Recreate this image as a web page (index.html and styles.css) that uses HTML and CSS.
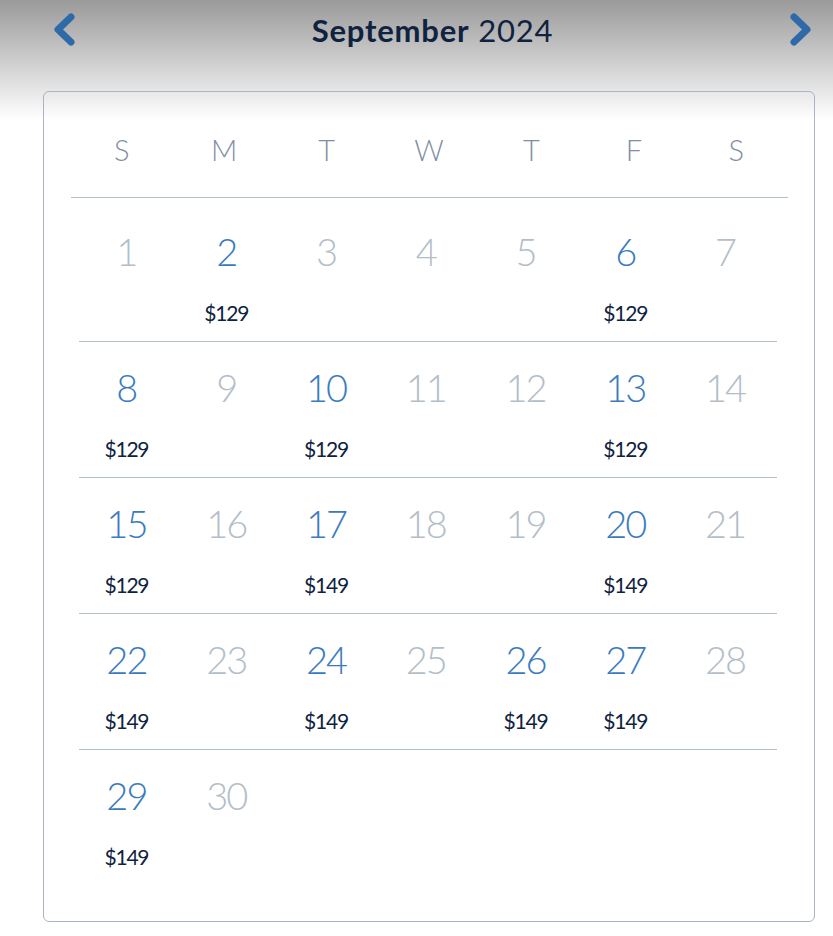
FILE: index.html
```html
<!DOCTYPE html>
<html lang="en">
<head>
<meta charset="utf-8">
<title>September 2024</title>
<link rel="stylesheet" href="styles.css">
</head>
<body>
<header class="month-bar">
  <svg class="chev" viewBox="0 0 28 36" width="28" height="36" aria-label="Previous month"><path d="M21 5 L8 17.5 L21 30"/></svg>
  <h1 class="title"><b>September</b> 2024</h1>
  <svg class="chev" viewBox="0 0 28 36" width="28" height="36" aria-label="Next month"><path d="M7 5 L20 17.5 L7 30"/></svg>
</header>
<section class="card">
  <div class="weekdays"><span>S</span><span>M</span><span>T</span><span>W</span><span>T</span><span>F</span><span>S</span></div>
  <div class="week first">
    <div class="day"><span class="num off">1</span><span class="price"></span></div>
    <div class="day"><span class="num on">2</span><span class="price">$129</span></div>
    <div class="day"><span class="num off">3</span><span class="price"></span></div>
    <div class="day"><span class="num off">4</span><span class="price"></span></div>
    <div class="day"><span class="num off">5</span><span class="price"></span></div>
    <div class="day"><span class="num on">6</span><span class="price">$129</span></div>
    <div class="day"><span class="num off">7</span><span class="price"></span></div>
  </div>
  <div class="week">
    <div class="day"><span class="num on">8</span><span class="price">$129</span></div>
    <div class="day"><span class="num off">9</span><span class="price"></span></div>
    <div class="day"><span class="num on">10</span><span class="price">$129</span></div>
    <div class="day"><span class="num off">11</span><span class="price"></span></div>
    <div class="day"><span class="num off">12</span><span class="price"></span></div>
    <div class="day"><span class="num on">13</span><span class="price">$129</span></div>
    <div class="day"><span class="num off">14</span><span class="price"></span></div>
  </div>
  <div class="week">
    <div class="day"><span class="num on">15</span><span class="price">$129</span></div>
    <div class="day"><span class="num off">16</span><span class="price"></span></div>
    <div class="day"><span class="num on">17</span><span class="price">$149</span></div>
    <div class="day"><span class="num off">18</span><span class="price"></span></div>
    <div class="day"><span class="num off">19</span><span class="price"></span></div>
    <div class="day"><span class="num on">20</span><span class="price">$149</span></div>
    <div class="day"><span class="num off">21</span><span class="price"></span></div>
  </div>
  <div class="week">
    <div class="day"><span class="num on">22</span><span class="price">$149</span></div>
    <div class="day"><span class="num off">23</span><span class="price"></span></div>
    <div class="day"><span class="num on">24</span><span class="price">$149</span></div>
    <div class="day"><span class="num off">25</span><span class="price"></span></div>
    <div class="day"><span class="num on">26</span><span class="price">$149</span></div>
    <div class="day"><span class="num on">27</span><span class="price">$149</span></div>
    <div class="day"><span class="num off">28</span><span class="price"></span></div>
  </div>
  <div class="week last">
    <div class="day"><span class="num on">29</span><span class="price">$149</span></div>
    <div class="day"><span class="num off">30</span><span class="price"></span></div>
    <div class="day"></div>
    <div class="day"></div>
    <div class="day"></div>
    <div class="day"></div>
    <div class="day"></div>
  </div>
</section>
</body>
</html>
```
FILE: styles.css
```css
html, body {
  margin: 0;
  padding: 0;
}
body {
  width: 833px;
  height: 936px;
  overflow: hidden;
  background: #fff linear-gradient(to bottom, #9a9a9a 0px, #ffffff 120px) no-repeat;
  font-family: Lato, "Noto Sans", sans-serif;
}
.month-bar {
  display: flex;
  align-items: flex-start;
  height: 91px;
  box-sizing: border-box;
  padding: 11px 18px 0 50px;
}
.chev {
  flex: none;
  fill: none;
  stroke: #2f6aa8;
  stroke-width: 7;
  stroke-linecap: round;
  stroke-linejoin: round;
  margin-top: 1px;
}
.title {
  flex: 1;
  margin: 1px 0 0;
  text-align: center;
  font-size: 31px;
  line-height: 36px;
  font-weight: 400;
  color: #0f2340;
  letter-spacing: 0.8px;
}
.title b {
  font-weight: 700;
}
.card {
  margin: 0 18px 0 43px;
  border: 1.5px solid #a9b5c3;
  border-radius: 6px;
  padding-bottom: 36px;
}
.weekdays {
  display: grid;
  grid-template-columns: repeat(7, 1fr);
  margin: 0 26.5px;
  padding: 43px 0 31.5px;
  border-bottom: 1.5px solid #b3bfcb;
  text-align: center;
  font-size: 29px;
  line-height: 30px;
  font-weight: 300;
  color: #7f8ea3;
}
.week {
  display: grid;
  grid-template-columns: repeat(7, 1fr);
  margin: 0 37px 0 34.5px;
  padding: 25px 0 15.5px;
  border-bottom: 1.5px solid #b3bfcb;
}
.week.first {
  padding-top: 33px;
}
.week.last {
  border-bottom: none;
}
.day {
  display: flex;
  flex-direction: column;
  align-items: center;
  margin-left: -4px;
}
.num {
  font-size: 38px;
  line-height: 40px;
  font-weight: 300;
  letter-spacing: -2px;
}
.num.on { color: #3a7bc0; }
.num.off { color: #b3bec9; }
.price {
  margin-top: 30.5px;
  height: 24px;
  font-size: 21px;
  line-height: 24px;
  color: #0f2340;
  letter-spacing: -1.2px;
}
```
